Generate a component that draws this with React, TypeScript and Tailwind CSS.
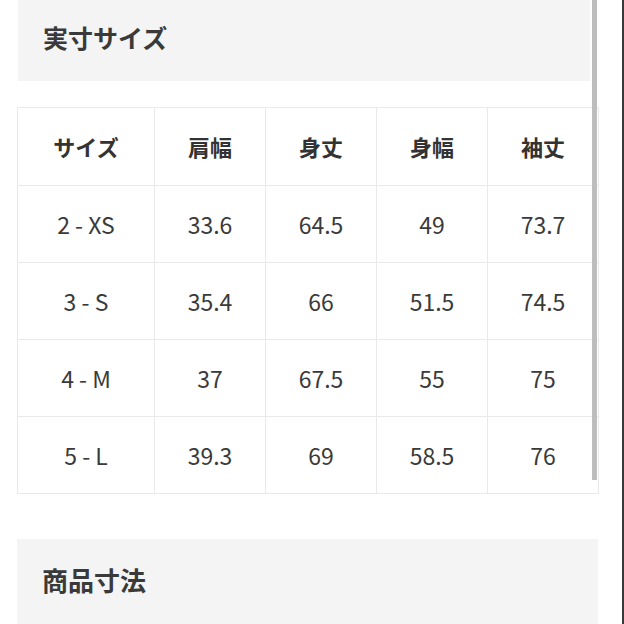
import React from "react";

const cols = ["サイズ", "肩幅", "身丈", "身幅", "袖丈"];
const rows = [
  ["2 - XS", "33.6", "64.5", "49", "73.7"],
  ["3 - S", "35.4", "66", "51.5", "74.5"],
  ["4 - M", "37", "67.5", "55", "75"],
  ["5 - L", "39.3", "69", "58.5", "76"],
];

export default function App() {
  return (
    <main
      className="relative w-[624px] h-[624px] overflow-hidden bg-white text-[#333]"
      style={{ fontFamily: '"Noto Sans CJK JP", "Noto Sans", sans-serif' }}
    >
      <div className="flex h-full">
        <div className="w-[624px] h-full pl-[17px] border-r-2 border-[#3a3a3a]">
          <div className="w-[581px]">
            <div className="ml-px w-[572px] h-[81px] bg-[#f4f4f4] flex items-center pl-[25px] pb-[6px]">
              <h2 className="text-[25px] font-bold text-[#3a3a3a]">実寸サイズ</h2>
            </div>
            <table className="mt-[26px] w-[581px] border-collapse table-fixed">
              <colgroup>
                <col className="w-[137px]" />
                <col className="w-[111px]" />
                <col className="w-[111px]" />
                <col className="w-[111px]" />
                <col className="w-[111px]" />
              </colgroup>
              <thead>
                <tr className="h-[78px]">
                  {cols.map((c) => (
                    <th key={c} className="border border-[#e9e9e9] text-[22px] font-bold text-center text-[#333]">
                      {c}
                    </th>
                  ))}
                </tr>
              </thead>
              <tbody>
                {rows.map((r, i) => (
                  <tr key={i} className="h-[77px]">
                    {r.map((v, j) => (
                      <td key={j} className="border border-[#e9e9e9] text-[23px] text-center text-[#3a3a3a]">
                        {v}
                      </td>
                    ))}
                  </tr>
                ))}
              </tbody>
            </table>
            <div className="mt-[45px] w-[581px] h-[100px] bg-[#f4f4f4] pl-[25px] pt-[21px]">
              <h2 className="text-[26px] font-bold text-[#3a3a3a]">商品寸法</h2>
            </div>
          </div>
        </div>
      </div>
      {/* scrollbar */}
      <div className="absolute left-[592px] top-0 w-[5px] h-[480px] bg-[#bdbdbd]" />
    </main>
  );
}
